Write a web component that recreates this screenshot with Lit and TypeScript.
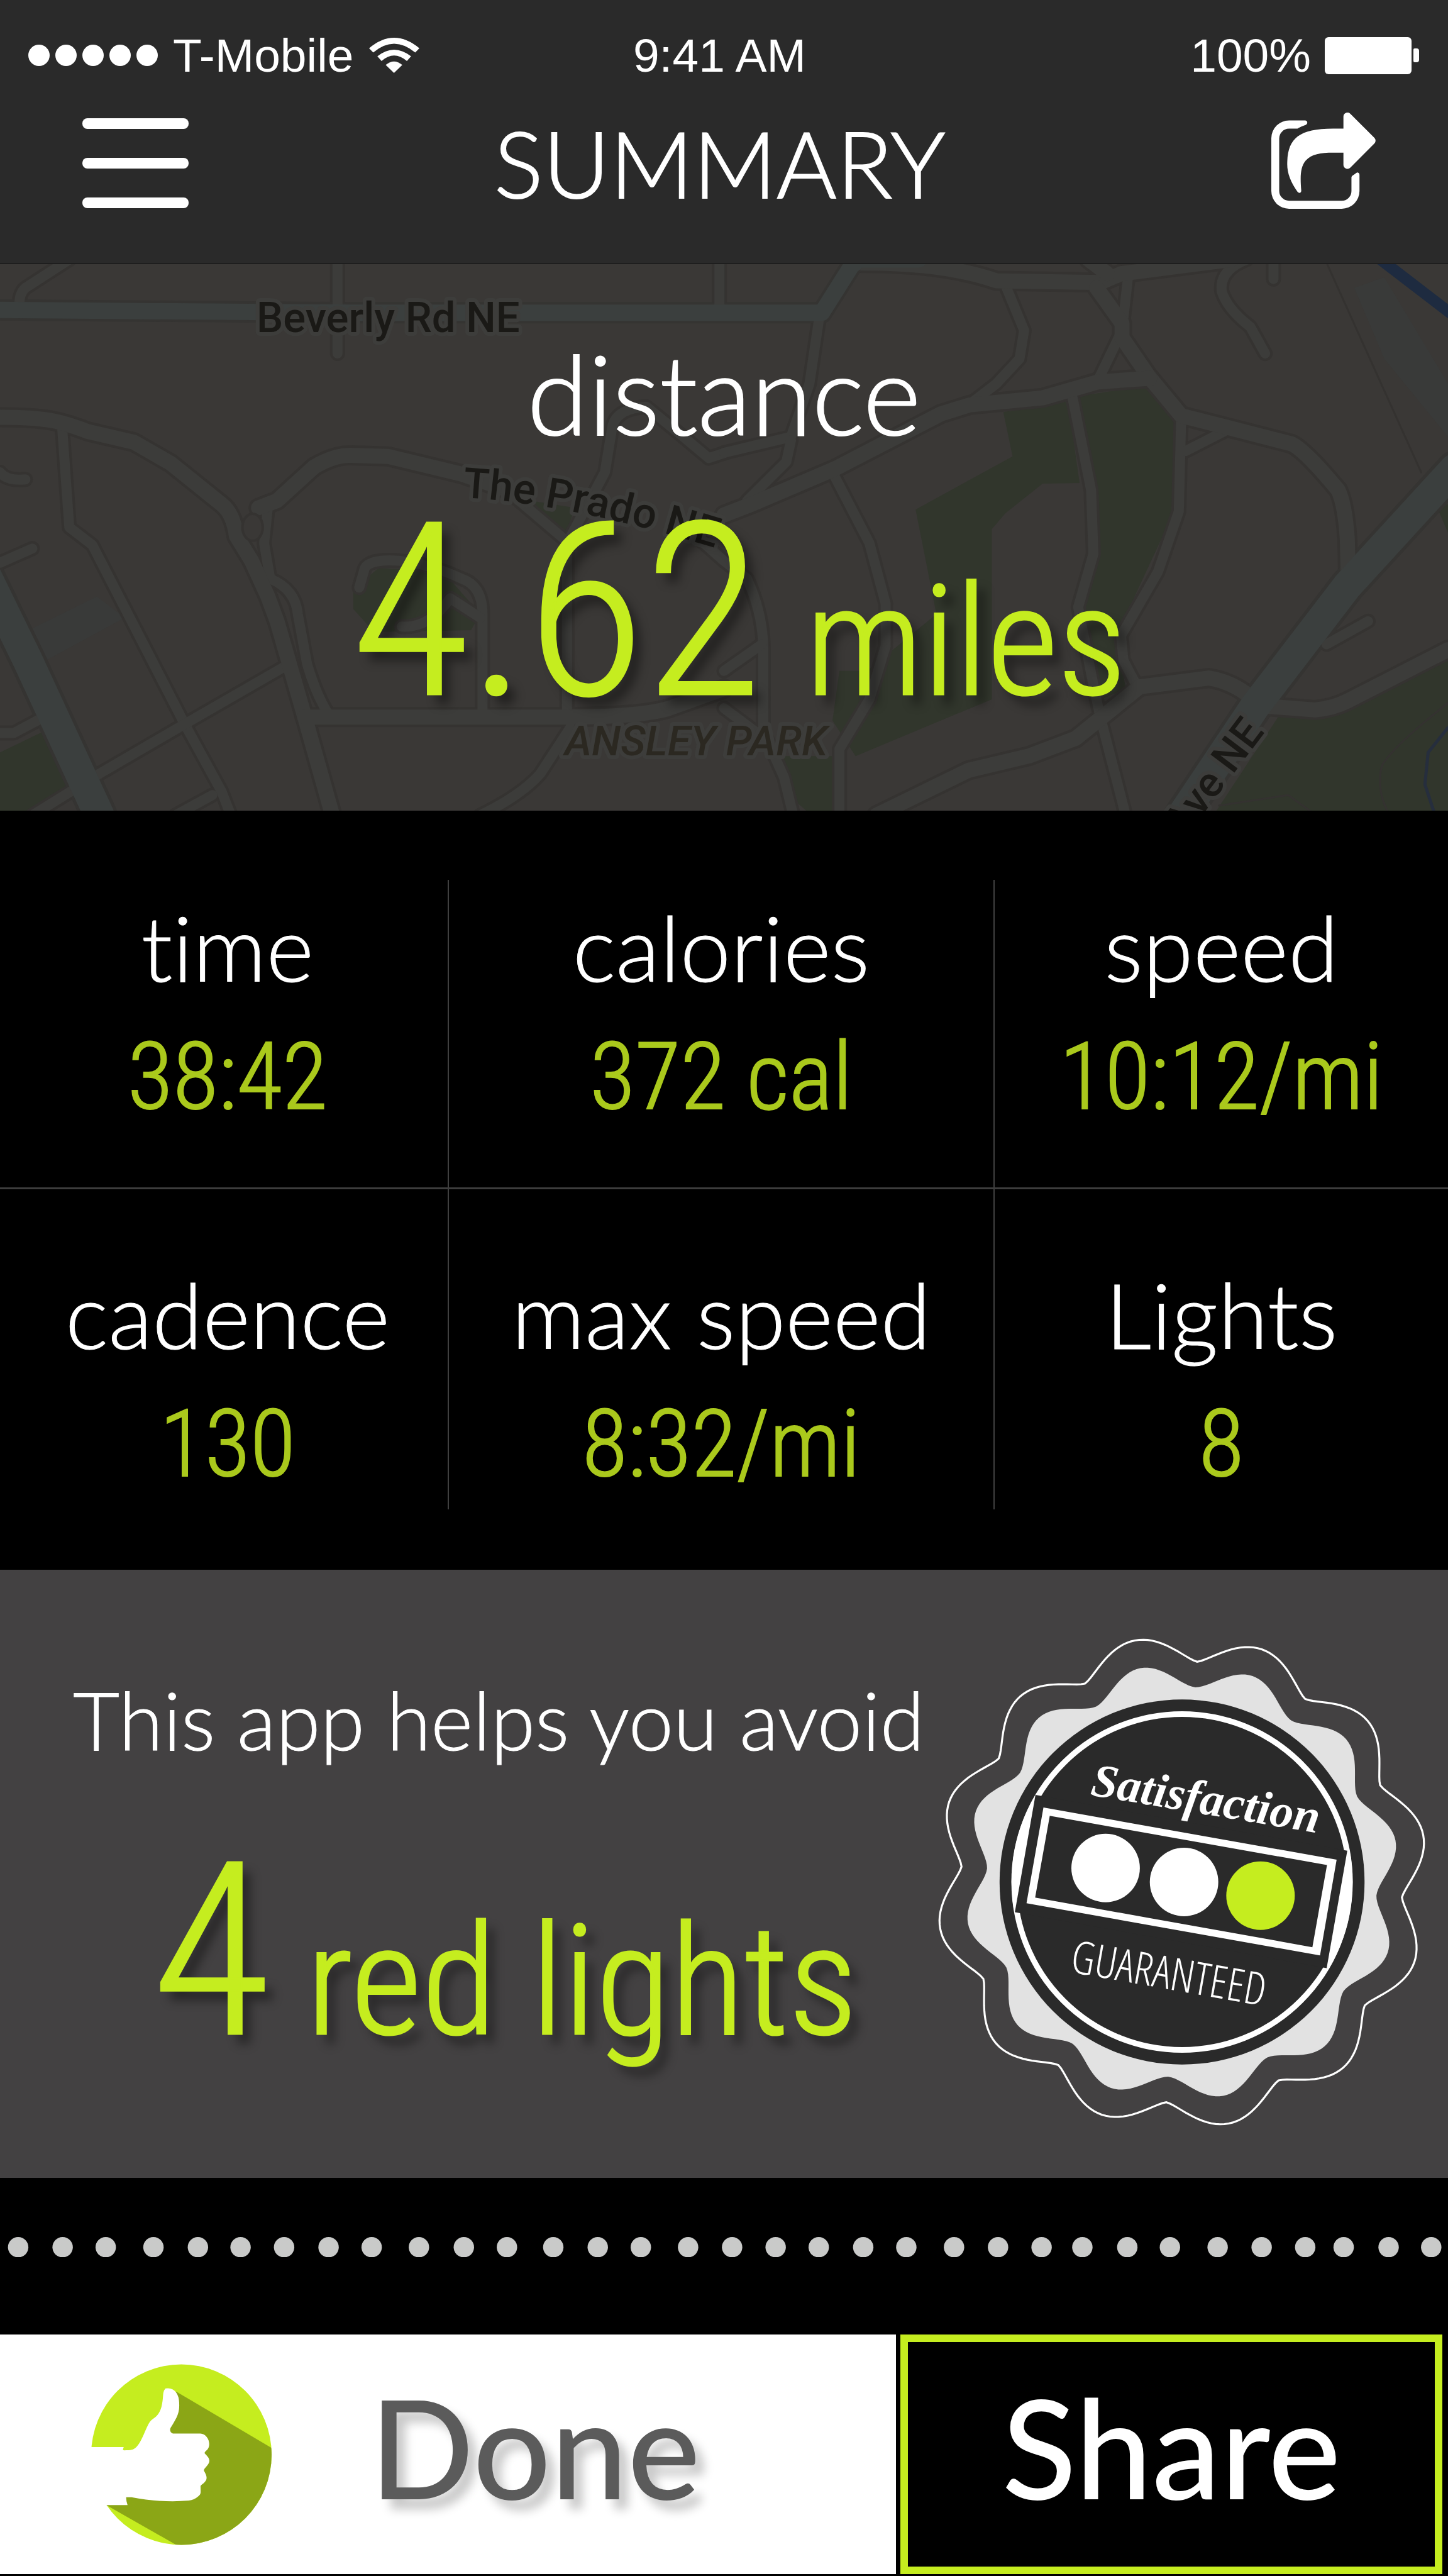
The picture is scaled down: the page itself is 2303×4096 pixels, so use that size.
import { LitElement, html, css, svg } from "lit";
import { customElement } from "lit/decorators.js";

const LIME = "#c5ed1f";

/** Closed wavy outline with twelve lobes around (767, 784). */
function rosette(valley: number, depth: number, power: number): string {
  const points: string[] = [];
  for (let deg = 0; deg < 360; deg += 1) {
    const lobe = Math.abs(Math.cos(((deg + 71) * 6 * Math.PI) / 180));
    const r = valley + depth * Math.pow(lobe, power);
    const a = (deg * Math.PI) / 180;
    points.push(`${(767 + r * Math.cos(a)).toFixed(1)},${(784 + r * Math.sin(a)).toFixed(1)}`);
  }
  return points.join(" ");
}

/* ---- street map ---- */

const PARKS = [
  "M820 870L765 930V985L810 1050L1020 1045L1040 1000L960 880Z",
  "M0 1390L95 1330L150 1480L50 1567H0Z",
  "M1150 680L1245 700L1225 775Z",
  "M2173 430L2313 400L2338 630L2258 632L2178 715L2148 760V1240L1853 1400L1803 1300L1818 1160H1878L2028 1000L1983 705L2193 555Z",
  "M2338 385L2488 355L2553 450L2543 710L2418 1060L2438 1210L2368 1250L2333 980L2373 850L2368 650Z",
  "M2768 1290L2888 1280L3136 1120V1567H2628Z",
  "M1678 1400H1803V1567H1758L1698 1500Z",
  "M3113 700L3136 690V770Z",
];

const LOTS = [
  "M70 1040L210 950L270 1010L100 1130Z",
  "M2933 80L2998 50L3136 350V500L2998 280Z",
];

const MINOR_ROADS = [
  "M150 0L55 80Q42 95 42 125",
  "M731 0V265",
  "M1558 0V140",
  "M135 480L150 755L200 805L400 1310L480 1500L500 1567",
  "M580 700L572 800L585 900Q640 930 645 1000L665 1140Q685 1230 715 1290",
  "M620 1145L400 1310L215 1450L70 1567",
  "M1045 1275V1000Q1045 920 1000 900C900 840 805 835 790 870L778 925",
  "M870 1035Q930 1040 975 955L1040 1010",
  "M1228 1290V800L1310 600L1325 480Q1330 420 1400 415L1480 500L1535 560L1570 545",
  "M1115 670L1228 795",
  "M1235 1320L1170 1450Q1130 1510 1040 1567",
  "M0 600Q15 625 55 620",
  "M0 855L70 815",
  "M0 1335H30L95 1290",
  "M460 1510L380 1567",
  "M1490 760L1568 850L1618 900Q1653 1000 1653 1100V1330L1698 1460L1718 1567",
  "M1568 1160L1650 1085",
  "M1568 1265L1655 1350",
  "M2180 80L2218 200L2208 280L2158 350L2108 400",
  "M1773 175L1753 350L1713 500L1568 545",
  "M1713 510L1703 570L1618 680",
  "M1803 600L1883 800L1918 970V1090L1883 1240L1818 1380V1567",
  "M2323 390L2363 650L2368 830L2335 980L2368 1200L2383 1290L2438 1567",
  "M2558 450L2553 710L2508 880L2428 1060L2433 1130L2465 1210",
  "M2443 50L2430 200L2380 335",
  "M2658 480L2568 540",
  "M2700 0Q2640 30 2646 90Q2658 140 2708 190L2740 265",
  "M2758 0V55",
  "M2873 1085L2963 1020",
];

const COLLECTOR_ROADS = [
  "M0 445C100 445 130 455 190 485L290 515L370 575L480 690Q505 715 512 780L545 850L580 950L600 1020L660 1290L720 1567",
  "M560 700L600 680L680 585Q725 550 760 552L840 555L1000 605L1100 650",
  "M660 1290H1215Q1390 1290 1450 1265L1568 1210",
  "M1868 10C1968 10 2068 20 2158 60L2383 65L2428 40L2668 0",
  "M2358 0L2398 40",
  "M2375 80L2430 180V220L2488 330L2558 440L2648 470L2798 520Q2828 540 2898 650Q2913 690 2918 790L2920 900",
  "M1568 720L1628 690L1808 590L2038 435L2100 410L2258 390L2378 345L2490 335",
  "M1898 1567L2098 1440L2228 1400L2330 1350L2468 1205L2618 1180Q2668 1190 2710 1235L2750 1260L2848 1270Q2888 1265 2918 1245L3136 1100",
];

const AVENUES = ["M-20 142L760 150H1780L1843 20L1860 0H1990"];
const DIAGONALS = ["M-30 890L60 1130L215 1567", "M3150 590L2918 920L2718 1260L2560 1567"];

const strokes = (paths: string[], cls: string) =>
  paths.map((d) => svg`<path class="way ${cls}" d=${d}></path>`);

@customElement("street-map")
class StreetMap extends LitElement {
  static styles = css`
    :host { display: block; position: absolute; inset: 0; overflow: hidden; background: #3a3836; }
    svg { position: absolute; inset: 0; width: 100%; height: 100%; }
    .way { fill: none; vector-effect: non-scaling-stroke; stroke-linecap: round; stroke-linejoin: round; }
    .minor-edge { stroke: #353331; stroke-width: 24px; }
    .minor { stroke: #3c3c3a; stroke-width: 16px; }
    .collector-edge { stroke: #353331; stroke-width: 32px; }
    .collector { stroke: #3c3c3a; stroke-width: 24px; }
    .avenue-edge { stroke: #353432; stroke-width: 34px; }
    .avenue { stroke: #3b3f3e; stroke-width: 26px; }
    .diagonal-edge { stroke: #353432; stroke-width: 58px; }
    .diagonal { stroke: #3b3f3e; stroke-width: 48px; }
    .boundary { stroke: #343230; stroke-width: 3px; }
    .river { stroke: #1e2b40; stroke-width: 18px; }
    .creek { stroke: #262e3d; stroke-width: 5px; }
    .park { fill: #31362c; }
    .lot { fill: #393a39; }
    .island { fill: #3a3836; stroke: #353331; stroke-width: 4px; vector-effect: non-scaling-stroke; }
    .name {
      font-family: Roboto, "Liberation Sans", sans-serif;
      font-size: 67px;
      font-weight: 500;
      fill: #1a1916;
      stroke: #3d3d3b;
      stroke-width: 12px;
      stroke-linejoin: round;
      paint-order: stroke;
    }
    .district { fill: #2b2821; font-style: italic; }
  `;

  render() {
    return html`
      <svg viewBox="0 13 3136 1541" preserveAspectRatio="none" aria-hidden="true">
        <path class="lot" d=${LOTS[0]}></path>
        <path class="lot" d=${LOTS[1]}></path>
        ${PARKS.map((d) => svg`<path class="park" d=${d}></path>`)}
        ${strokes(["M2875 15L3078 600", "M3136 1250Q3010 1380 2992 1430Q2980 1500 3010 1567", "M2640 1540L2790 1510L2850 1567"], "boundary")}
        ${strokes(MINOR_ROADS, "minor-edge")}
        ${strokes(COLLECTOR_ROADS, "collector-edge")}
        ${strokes(AVENUES, "avenue-edge")}
        ${strokes(DIAGONALS, "diagonal-edge")}
        ${strokes(MINOR_ROADS, "minor")}
        ${strokes(COLLECTOR_ROADS, "collector")}
        ${strokes(AVENUES, "avenue")}
        ${strokes(DIAGONALS, "diagonal")}
        ${strokes(["M2980 -10L3150 160"], "river")}
        ${strokes(["M3136 1320L3093 1390L3086 1480L3108 1567"], "creek")}
        <ellipse class="island" cx="547" cy="755" rx="22" ry="38"></ellipse>
      </svg>
      <svg viewBox="0 0 2303 869" preserveAspectRatio="xMidYMid slice">
        <defs><path id="prado" d="M736 371Q900 380 1120 446"></path></defs>
        <text class="name" x="408" y="108">Beverly Rd NE</text>
        <text class="name"><textPath href="#prado">The Prado NE</textPath></text>
        <text class="name district" x="898" y="781">ANSLEY PARK</text>
        <text class="name" text-anchor="end" transform="translate(2012 744) rotate(-53)">Ave NE</text>
      </svg>
    `;
  }
}

/* ---- satisfaction seal ---- */

@customElement("guarantee-seal")
class GuaranteeSeal extends LitElement {
  static styles = css`
    :host { display: block; }
    svg { display: block; width: 100%; }
    .script { font: italic 700 142px "Liberation Serif", serif; fill: #fff; }
    .narrow { font: 300 136px "Open Sans Condensed Light", "Open Sans Condensed", sans-serif; fill: #fff; }
  `;

  render() {
    return html`
      <svg viewBox="0 0 1568 1568" role="img" aria-label="Satisfaction guaranteed">
        <defs>
          <clipPath id="band"><path d="M-264 423L1854 803L1793 1142L-322 762Z"></path></clipPath>
        </defs>
        <polygon points=${rosette(664, 76, 1.35)} fill="none" stroke="#fff" stroke-width="6"></polygon>
        <polygon points=${rosette(587, 68, 1.7)} fill="#e2e2e2"></polygon>
        <circle cx="768" cy="784" r="549" fill="#2a2a2a"></circle>
        <circle cx="768" cy="784" r="505" fill="none" stroke="#fff" stroke-width="17"></circle>
        <circle cx="768" cy="784" r="513" fill="#fff" clip-path="url(#band)"></circle>
        <path d="M327 522L1265 690L1203 1043L265 875Z" fill="#2a2a2a"></path>
        <path d="M351 560L1233 717L1183 1005L300 848Z M370 585L326 831L1160 980L1204 733Z" fill="#fff"></path>
        <circle cx="538" cy="742" r="103" fill="#fff"></circle>
        <circle cx="774" cy="784" r="103" fill="#fff"></circle>
        <circle cx="1004" cy="825" r="103" fill=${LIME}></circle>
        <text class="script" transform="translate(490 522) rotate(9.5)">Satisfaction</text>
        <text class="narrow" transform="translate(428 1054) rotate(10)">GUARANTEED</text>
      </svg>
    `;
  }
}

/* ---- page ---- */

const STATS = [
  [
    { label: "time", value: "38:42" },
    { label: "calories", value: "372 cal" },
    { label: "speed", value: "10:12/mi" },
  ],
  [
    { label: "cadence", value: "130" },
    { label: "max speed", value: "8:32/mi" },
    { label: "Lights", value: "8" },
  ],
];

const DOTS = [
  39, 135, 228, 331, 427, 519, 613, 709, 802, 904, 1001, 1094, 1194, 1290, 1383, 1485, 1580,
  1674, 1767, 1863, 1956, 2059, 2154, 2248, 2336, 2433, 2525, 2628, 2723, 2817, 2900, 2997, 3089,
];

@customElement("app-root")
class AppRoot extends LitElement {
  static styles = css`
    :host {
      display: block;
      min-height: 100vh;
      background: #000;
      color: #fff;
      font-family: Lato, "Liberation Sans", sans-serif;
      font-weight: 300;
      font-variant-ligatures: none;
    }
    * { box-sizing: border-box; }
    button {
      margin: 0;
      padding: 0;
      border: 0;
      background: none;
      color: inherit;
      font: inherit;
      cursor: pointer;
    }
    svg { display: block; }
    h1, p, dl, dt, dd { margin: 0; font-weight: inherit; }

    .top { background: #2a2a2a; border-bottom: 2px solid #1e1e1e; padding-bottom: 69px; }
    .status {
      display: grid;
      grid-template-columns: 1fr auto 1fr;
      align-items: center;
      padding: 48px 46px 0 32px;
      font: 400 75px/80px "Liberation Sans", Arial, sans-serif;
    }
    .carrier { display: flex; align-items: center; gap: 24px; padding-left: 13px; }
    .signal { display: flex; gap: 9px; }
    .signal i { width: 34px; height: 34px; border-radius: 50%; background: #fff; }
    .wifi { width: 80px; height: 56px; }
    .power { display: flex; align-items: center; justify-content: flex-end; gap: 22px; }
    .battery { display: flex; align-items: center; gap: 3px; }
    .cell { width: 138px; height: 59px; border-radius: 6px; background: #fff; }
    .tip { width: 9px; height: 22px; border-radius: 2px 4px 4px 2px; background: #fff; }

    .nav {
      display: grid;
      grid-template-columns: 1fr auto 1fr;
      align-items: center;
      padding: 41px 115px 0 101px;
    }
    .nav h1 { font-size: 146px; line-height: 180px; -webkit-text-stroke: 2px #fff; }
    .menu { display: grid; gap: 46px; justify-self: start; padding-left: 30px; }
    .menu i { width: 169px; height: 17px; border-radius: 8px; background: #fff; }
    .open { justify-self: end; padding-bottom: 8px; }
    .open svg { width: 166px; height: 153px; }

    .hero { position: relative; padding: 104px 0 86px; text-align: center; }
    .hero-body { position: relative; }
    .hero-label { font-size: 176px; line-height: 200px; -webkit-text-stroke: 2px #fff; }
    .figure {
      display: flex;
      align-items: baseline;
      justify-content: center;
      color: #c5ed1f;
      font-family: "Roboto Condensed", Roboto, sans-serif;
      -webkit-text-stroke: 3px #c5ed1f;
      text-shadow: 14px 16px 16px rgba(0, 0, 0, 0.4);
      white-space: nowrap;
    }
    .big { font-size: 384px; line-height: 460px; }
    .unit { font-size: 244px; line-height: 280px; }
    .hero .figure { margin-top: 19px; gap: 70px; padding-left: 48px; }

    .stats { padding: 110px 0 96px; }
    .row { display: grid; grid-template-columns: 712fr 868fr 723fr; text-align: center; }
    .row + .row { border-top: 3px solid #3d3d3d; }
    .stat { padding: 21px 0 80px; }
    .row + .row .stat { padding: 113px 0 8px; }
    .row .stat:first-child { padding-left: 12px; }
    .stat + .stat { border-left: 2px solid #404040; }
    .stat dt { font-size: 145px; line-height: 170px; -webkit-text-stroke: 1px #fff; }
    .stat dd {
      margin-top: 28px;
      color: #aac91c;
      font: 300 148px/190px "Roboto Condensed", Roboto, sans-serif;
      -webkit-text-stroke: 2px #aac91c;
    }

    .promo {
      display: flex;
      justify-content: space-between;
      background: #434142;
      padding: 82px 0 56px 116px;
    }
    .promo-text { display: flex; flex-direction: column; align-items: center; padding-top: 76px; white-space: nowrap; }
    .promo-lead { font-size: 128px; line-height: 160px; -webkit-text-stroke: 1px #fff; }
    .promo .figure { margin-top: 59px; gap: 58px; padding-left: 20px; }
    .seal { flex: 0 0 829px; }

    .dots { padding: 94px 0 123px; }
    .dots svg { width: 100%; }

    .actions { display: grid; grid-template-columns: 1425fr 862fr; gap: 7px; padding-right: 9px; }
    .action { height: 381px; display: flex; align-items: center; font-size: 218px; line-height: 240px; font-weight: 500; }
    .action span { padding-bottom: 26px; }
    .done { background: #fff; color: #5b5b5b; gap: 156px; padding-left: 145px; text-shadow: 14px 16px 16px rgba(0, 0, 0, 0.22); }
    .done svg { width: 287px; height: 288px; }
    .share { justify-content: center; border: 12px solid #c5ed1f; }
  `;

  render() {
    return html`
      <header class="top">
        <div class="status">
          <div class="carrier">
            <span class="signal"><i></i><i></i><i></i><i></i><i></i></span>
            <span>T-Mobile</span>
            <svg class="wifi" viewBox="801 207 109 208" preserveAspectRatio="none" fill="#fff" aria-label="Wi-Fi">
              <path d="M801 269Q855 145 910 269L901 294Q855 190 810 294Z"></path>
              <path d="M819 317Q855 238 892 317L883 344Q855 279 828 344Z"></path>
              <path d="M837 368Q855 326 873 368L855 415Z"></path>
            </svg>
          </div>
          <span>9:41 AM</span>
          <div class="power">
            <span>100%</span>
            <span class="battery"><i class="cell"></i><i class="tip"></i></span>
          </div>
        </div>
        <nav class="nav">
          <button class="menu" aria-label="Menu"><i></i><i></i><i></i></button>
          <h1>SUMMARY</h1>
          <button class="open" aria-label="Share summary">
            <svg viewBox="130 66 676 623" fill="#fff" aria-hidden="true">
              <path d="M299 170H245A64 64 0 0 0 181 234V573A64 64 0 0 0 245 637H586A63 63 0 0 0 649 574V484Q650 477 657 473Q667 468 676 460Q683 453 690 454Q701 457 701 468V574A115 115 0 0 1 586 689H245A115 115 0 0 1 130 574V232A115 115 0 0 1 245 117H350Q363 119 363 132Q362 142 354 145Q326 154 304 167Q302 170 299 170Z"></path>
              <path d="M597 170V92A26 26 0 0 1 642 74L799 231Q811 248 799 265L642 422A26 26 0 0 1 597 404V326H530C450 326 390 335 352 378C318 418 316 480 324 573Q322 586 311 586Q304 585 299 578C255 515 233 460 233 400C234 240 300 170 530 170Z"></path>
            </svg>
          </button>
        </nav>
      </header>

      <section class="hero">
        <street-map></street-map>
        <div class="hero-body">
          <p class="hero-label">distance</p>
          <p class="figure"><span class="big">4.62</span><span class="unit">miles</span></p>
        </div>
      </section>

      <section class="stats">
        ${STATS.map(
          (row) => html`<div class="row">
            ${row.map((s) => html`<dl class="stat"><dt>${s.label}</dt><dd>${s.value}</dd></dl>`)}
          </div>`
        )}
      </section>

      <section class="promo">
        <div class="promo-text">
          <p class="promo-lead">This app helps you avoid</p>
          <p class="figure"><span class="big">4</span><span class="unit">red lights</span></p>
        </div>
        <guarantee-seal class="seal"></guarantee-seal>
      </section>

      <div class="dots">
        <svg viewBox="0 0 3125 44" fill="#c9cac9" aria-hidden="true">
          ${DOTS.map((x) => svg`<circle cx=${x} cy="22" r="22"></circle>`)}
        </svg>
      </div>

      <footer class="actions">
        <button class="action done">
          <svg viewBox="142 165 1170 1172" aria-hidden="true">
            <defs><clipPath id="disc"><circle cx="727" cy="751" r="585"></circle></clipPath></defs>
            <g clip-path="url(#disc)">
              <path d="M100 100H1400V1400H100Z" fill=${LIME}></path>
              <path d="M693 342L1311 707L1400 1400H806L693 1336L240 1078L500 950L640 600Z" fill="#8ba616"></path>
            </g>
            <path d="M100 702H353L348 717Q348 723 356 723C400 722 415 722 435 702C475 665 500 560 530 530C550 510 580 505 598 440C608 400 607 370 610 350Q614 332 624 322Q668 314 692 347Q713 370 713 430C715 490 685 530 656 579Q648 605 672 614H850C900 614 930 695 887 727Q872 740 880 745C915 780 918 795 887 830Q868 849 874 857C900 900 895 920 860 945Q850 951 851 958C852 1000 855 1005 838 1020Q810 1045 775 1049C650 1060 520 1050 403 1027H369Q368 1050 378 1078H100Z" fill="#fff"></path>
          </svg>
          <span>Done</span>
        </button>
        <button class="action share"><span>Share</span></button>
      </footer>
    `;
  }
}
